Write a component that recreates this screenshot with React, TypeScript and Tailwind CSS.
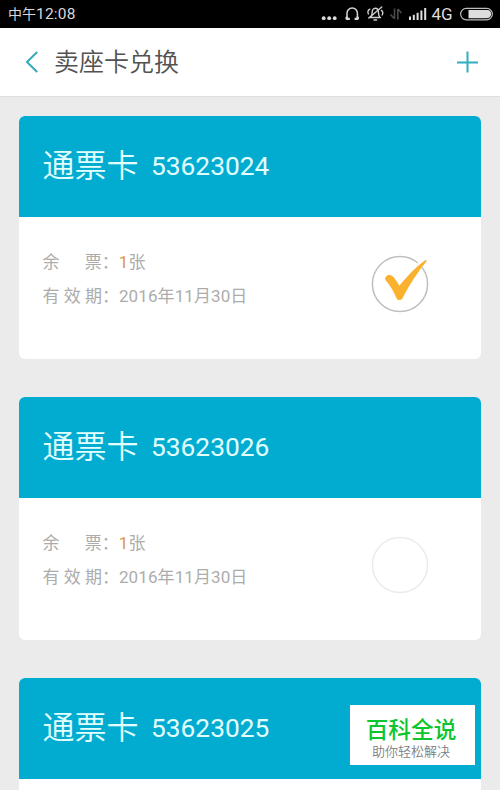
type Card = {
  name: string
  number: string
  details?: { tickets: number; expires: string }
}

const cards: Card[] = [
  { name: "通票卡", number: "53623024", details: { tickets: 1, expires: "2016年11月30日" } },
  { name: "通票卡", number: "53623026", details: { tickets: 1, expires: "2016年11月30日" } },
  { name: "通票卡", number: "53623025" },
]

function StatusIcons() {
  return (
    <svg width="180" height="28" viewBox="320 0 180 28" fill="none" className="shrink-0">
      {/* More */}
      <g fill="#dcdcdc">
        <circle cx="323.7" cy="18.2" r="1.9" />
        <circle cx="329.2" cy="18.2" r="1.9" />
        <circle cx="334.7" cy="18.2" r="1.9" />
      </g>

      {/* Headset */}
      <path d="M347 17.5V13.2a5 5 0 0 1 10.4 0V17.5" stroke="#d8d8d8" strokeWidth="1.5" />
      <path
        d="M346 16.500c-1.200 1.300-.6 3.500 1 3.500h2.800v-2.300h-1.800v-1.200zM358.400 16.500c1.200 1.300.6 3.500-1 3.500h-2.800v-2.300h1.800v-1.200z"
        fill="#d8d8d8"
      />

      {/* Muted bell */}
      <g stroke="#cfcfcf" strokeWidth="1.4" strokeLinecap="round">
        <path d="M370 17.500h10.500M371 17.200c.9-1.400 1.100-2.500 1.100-4.500 0-2.600 1.300-4.500 3.200-4.500s3.200 1.900 3.200 4.500c0 2 .2 3.100 1.100 4.500" />
        <path d="M381.8 7 368.8 18" />
        <path d="M374 20h2.6" />
        <path d="M369.8 9.2c-1.9 1-2.4 3-1.4 4.800M381.400 10.400c1.600 1 1.800 3 .8 4.600" />
      </g>

      {/* Data transfer */}
      <g stroke="#4a4a4a" strokeWidth="1.6">
        <path d="M394.500 8.500V19M390.500 14.500l4 4.200M397.800 19.500V9M401.500 13l-3.700-4" />
      </g>

      {/* Signal */}
      <g fill="#e0e0e0">
        <rect x="409" y="16.5" width="2" height="3.5" />
        <rect x="412.8" y="14.8" width="2" height="5.2" />
        <rect x="416.6" y="12.8" width="2" height="7.2" />
        <rect x="420.4" y="10.5" width="2" height="9.5" />
        <rect x="424.2" y="8" width="2" height="12" />
      </g>

      <text x="431.5" y="19.8" fontSize="17" fill="#dcdcdc" fontFamily="Roboto, sans-serif">
        4G
      </text>

      {/* Battery */}
      <rect x="460.6" y="8.4" width="31.8" height="11.4" rx="5.7" stroke="#bdbdbd" strokeWidth="1.2" />
      <path d="M468.5 10H487a4.1 4.1 0 0 1 0 8.2H468.5z" fill="#dedede" />
    </svg>
  )
}

function StatusBar() {
  return (
    <div className="flex h-7 items-center justify-between bg-black pl-2 text-[#d8d8d8]">
      <div className="flex items-center leading-none">
        <span className="text-[14px]">中午</span>
        <span className="pt-0.5 text-[15.5px] tracking-[0.2px]">12:08</span>
      </div>
      <StatusIcons />
    </div>
  )
}

function TitleBar() {
  return (
    <header className="flex h-[69px] items-center border-b border-[#dedede] bg-white pr-[21px] pl-[25px]">
      <svg width="14" height="22" viewBox="0 0 14 22" fill="none" stroke="#35a9b9" strokeWidth="2">
        <path d="M12.2 1 2 11l10.2 10" />
      </svg>
      <h1 className="ml-[15px] flex-1 pt-px text-[25px] leading-none font-[350] text-[#525252]">卖座卡兑换</h1>
      <svg width="22" height="22" viewBox="0 0 22 22" stroke="#2fb0c0" strokeWidth="2">
        <path d="M10.5 .5v21M0 11.500h21" />
      </svg>
    </header>
  )
}

function CheckCircle({ checked }: { checked: boolean }) {
  return (
    <svg width="60" height="60" viewBox="0 0 60 60" fill="none">
      <circle cx="30" cy="30" r="27.6" stroke={checked ? "#bcbfc3" : "#ebebeb"} strokeWidth="1.5" />
      {checked && (
        <>
          <path d="M47 13 55 8" stroke="#fff" strokeWidth="6" />
          <path
            d="M16.200 22.500c2-2.200 5.500-1.700 7.500.7 2.200 2.600 4 5.500 5.600 8.600C37 22.500 45.500 13 55.200 6.200c1-.5 1.700.3 1.100 1.300C47.500 18 40 30 32.600 44c-1.200 2.600-4.700 2.800-6.100.2C23.700 38 20.700 32 16 26.800c-1.200-1.300-1.200-2.900.2-4.300z"
            fill="#f9b12e"
          />
        </>
      )}
    </svg>
  )
}

function TicketCard({ card, checked }: { card: Card; checked: boolean }) {
  return (
    <article className="h-[243px] shrink-0 overflow-hidden rounded-md bg-white">
      <div className="flex h-[101px] items-center bg-[#02acd1] pl-[23.5px] text-[#e2ffff]">
        <span className="pb-px text-[32px] leading-none font-[350]">{card.name}</span>
        <span className="ml-[12.5px] text-[26.3px] leading-none">{card.number}</span>
      </div>
      {card.details && (
        <div className="flex items-start justify-between pt-7 pr-[51.5px] pl-[23.5px]">
          <div className="text-[17px] leading-[34px] whitespace-pre text-[#acacac]">
            <p>
              {"余      票："}
              <span className="text-[#e0973a]">{card.details.tickets}</span>张
            </p>
            <p>
              有 效 期：<span className="tracking-[0.1px]">{card.details.expires}</span>
            </p>
          </div>
          <div className="pt-[9px]">
            <CheckCircle checked={checked} />
          </div>
        </div>
      )}
    </article>
  )
}

function Watermark() {
  return (
    <div className="absolute top-[705px] left-[350px] flex h-[60px] w-[125px] flex-col items-center bg-white pt-[13px] pr-[3px]">
      <span className="text-[22.7px] leading-[26px] font-medium text-[#0bc62f]">百科全说</span>
      <span className="text-[13px] leading-4 font-[350] text-[#808080]">助你轻松解决</span>
    </div>
  )
}

export default function App() {
  const selected = "53623024"

  return (
    <div className="relative flex h-[790px] w-[500px] flex-col overflow-hidden bg-[#ebebeb] font-[Roboto,'Noto_Sans_CJK_SC',sans-serif]">
      <StatusBar />
      <TitleBar />
      <main className="flex min-h-0 flex-1 flex-col gap-[38px] overflow-hidden px-[19px] pt-[19px]">
        {cards.map((card) => (
          <TicketCard key={card.number} card={card} checked={card.number === selected} />
        ))}
      </main>
      <Watermark />
    </div>
  )
}
